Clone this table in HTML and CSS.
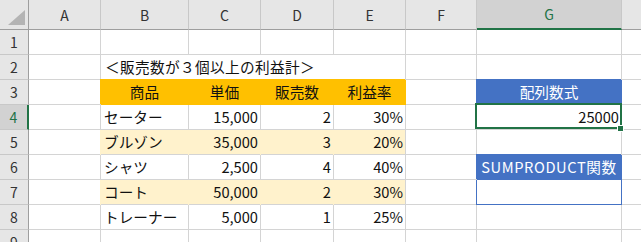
FILE: index.html
```html
<!DOCTYPE html>
<html lang="ja">
<head>
<meta charset="utf-8">
<title>Sheet</title>
<link rel="stylesheet" href="styles.css">
</head>
<body>
<div class="sheet">
  <div class="c hd corner"><svg width="28" height="29" viewBox="0 0 28 29"><polygon points="8,25 25,25 25,10" fill="#b4b4b4"/></svg></div>
  <div class="c hd col">A</div>
  <div class="c hd col">B</div>
  <div class="c hd col">C</div>
  <div class="c hd col">D</div>
  <div class="c hd col">E</div>
  <div class="c hd col">F</div>
  <div class="c hd col selc">G</div>
  <div class="c hd col"></div>

  <div class="c hd row">1</div>
  <div class="c"></div><div class="c"></div><div class="c"></div><div class="c"></div><div class="c"></div><div class="c"></div><div class="c"></div><div class="c"></div>

  <div class="c hd row">2</div>
  <div class="c"></div>
  <div class="c title">＜販売数が３個以上の利益計＞</div>
  <div class="c"></div><div class="c"></div><div class="c"></div>

  <div class="c hd row">3</div>
  <div class="c"></div>
  <div class="c m or">商品</div>
  <div class="c m or">単価</div>
  <div class="c m or">販売数</div>
  <div class="c m or">利益率</div>
  <div class="c"></div>
  <div class="c m bl">配列数式</div>
  <div class="c"></div>

  <div class="c hd row selr">4</div>
  <div class="c"></div>
  <div class="c">セーター</div>
  <div class="c r">15,000</div>
  <div class="c r">2</div>
  <div class="c r">30%</div>
  <div class="c"></div>
  <div class="c r sel">25000</div>
  <div class="c"></div>

  <div class="c hd row">5</div>
  <div class="c"></div>
  <div class="c lt">ブルゾン</div>
  <div class="c r lt">35,000</div>
  <div class="c r lt">3</div>
  <div class="c r lt last">20%</div>
  <div class="c"></div>
  <div class="c"></div>
  <div class="c"></div>

  <div class="c hd row">6</div>
  <div class="c"></div>
  <div class="c">シャツ</div>
  <div class="c r">2,500</div>
  <div class="c r">4</div>
  <div class="c r">40%</div>
  <div class="c"></div>
  <div class="c m bl wide">SUMPRODUCT関数</div>
  <div class="c"></div>

  <div class="c hd row">7</div>
  <div class="c"></div>
  <div class="c lt">コート</div>
  <div class="c r lt">50,000</div>
  <div class="c r lt">2</div>
  <div class="c r lt last">30%</div>
  <div class="c"></div>
  <div class="c blb"></div>
  <div class="c"></div>

  <div class="c hd row">8</div>
  <div class="c"></div>
  <div class="c">トレーナー</div>
  <div class="c r">5,000</div>
  <div class="c r">1</div>
  <div class="c r">25%</div>
  <div class="c"></div>
  <div class="c"></div>
  <div class="c"></div>

  <div class="c hd row">9</div>
  <div class="c"></div><div class="c"></div><div class="c"></div><div class="c"></div><div class="c"></div><div class="c"></div><div class="c"></div><div class="c"></div>
</div>
</body>
</html>
```
FILE: styles.css
```css
html, body {
  margin: 0;
  padding: 0;
  overflow: hidden;
  background: #fff;
}
body {
  font-family: "Noto Sans CJK JP", "Noto Sans", sans-serif;
  font-size: 14.67px;
  color: #111;
}
.sheet {
  display: grid;
  grid-template-columns: 29px 72px 88px 72px 73px 72px 71px 145px 72px;
  grid-template-rows: 30px repeat(9, 25px);
  width: max-content;
}
.c {
  box-sizing: border-box;
  border-right: 1px solid #d4d4d4;
  border-bottom: 1px solid #d4d4d4;
  display: flex;
  align-items: center;
  padding: 0 3px;
  white-space: nowrap;
  line-height: 1;
  min-width: 0;
}
.r { justify-content: flex-end; padding-right: 2px; }
.m { justify-content: center; }
.title { grid-column: span 4; letter-spacing: 0.35px; padding-left: 4px; }
.wide { letter-spacing: 0.6px; padding: 0; }
.hd {
  background: #e6e6e6;
  color: #333;
  justify-content: center;
  font-size: 14px;
  padding: 0;
}
.col { border-right-color: #c8c8c8; border-bottom-color: #9e9e9e; }
.row { border-right-color: #9e9e9e; border-bottom-color: #c8c8c8; }
.corner {
  border-right-color: #9e9e9e;
  border-bottom-color: #9e9e9e;
  align-items: flex-start;
  justify-content: flex-start;
}
.corner svg { display: block; }
.selc {
  background: #d2d2d2;
  color: #217346;
  border-bottom: 2px solid #217346;
}
.selr {
  background: #d2d2d2;
  color: #217346;
  border-right: 2px solid #217346;
}
.or {
  background: #ffc000;
  border-right-color: #ffc000;
  border-bottom-color: #ffc000;
  box-shadow: -1px -1px 0 #ffc000;
}
.lt {
  background: #fff2cc;
  border-right-color: #fff2cc;
  box-shadow: -1px 0 0 #fff2cc;
}
.lt.last { border-right-color: #d4d4d4; }
.bl {
  background: #4472c4;
  color: #fff;
  border-right-color: #4472c4;
  border-bottom-color: #4472c4;
  box-shadow: -1px -1px 0 #4472c4;
}
.blb {
  border-right-color: #4472c4;
  border-bottom-color: #4472c4;
  box-shadow: -1px 0 0 #4472c4;
}
.sel { position: relative; }
.sel::after {
  content: "";
  position: absolute;
  left: -2px;
  top: -2px;
  right: -1px;
  bottom: 0;
  border: 2px solid #217346;
}
.sel::before {
  content: "";
  position: absolute;
  right: -3px;
  bottom: -3px;
  width: 5px;
  height: 5px;
  background: #217346;
  border: 1px solid #fff;
  z-index: 1;
}
```
